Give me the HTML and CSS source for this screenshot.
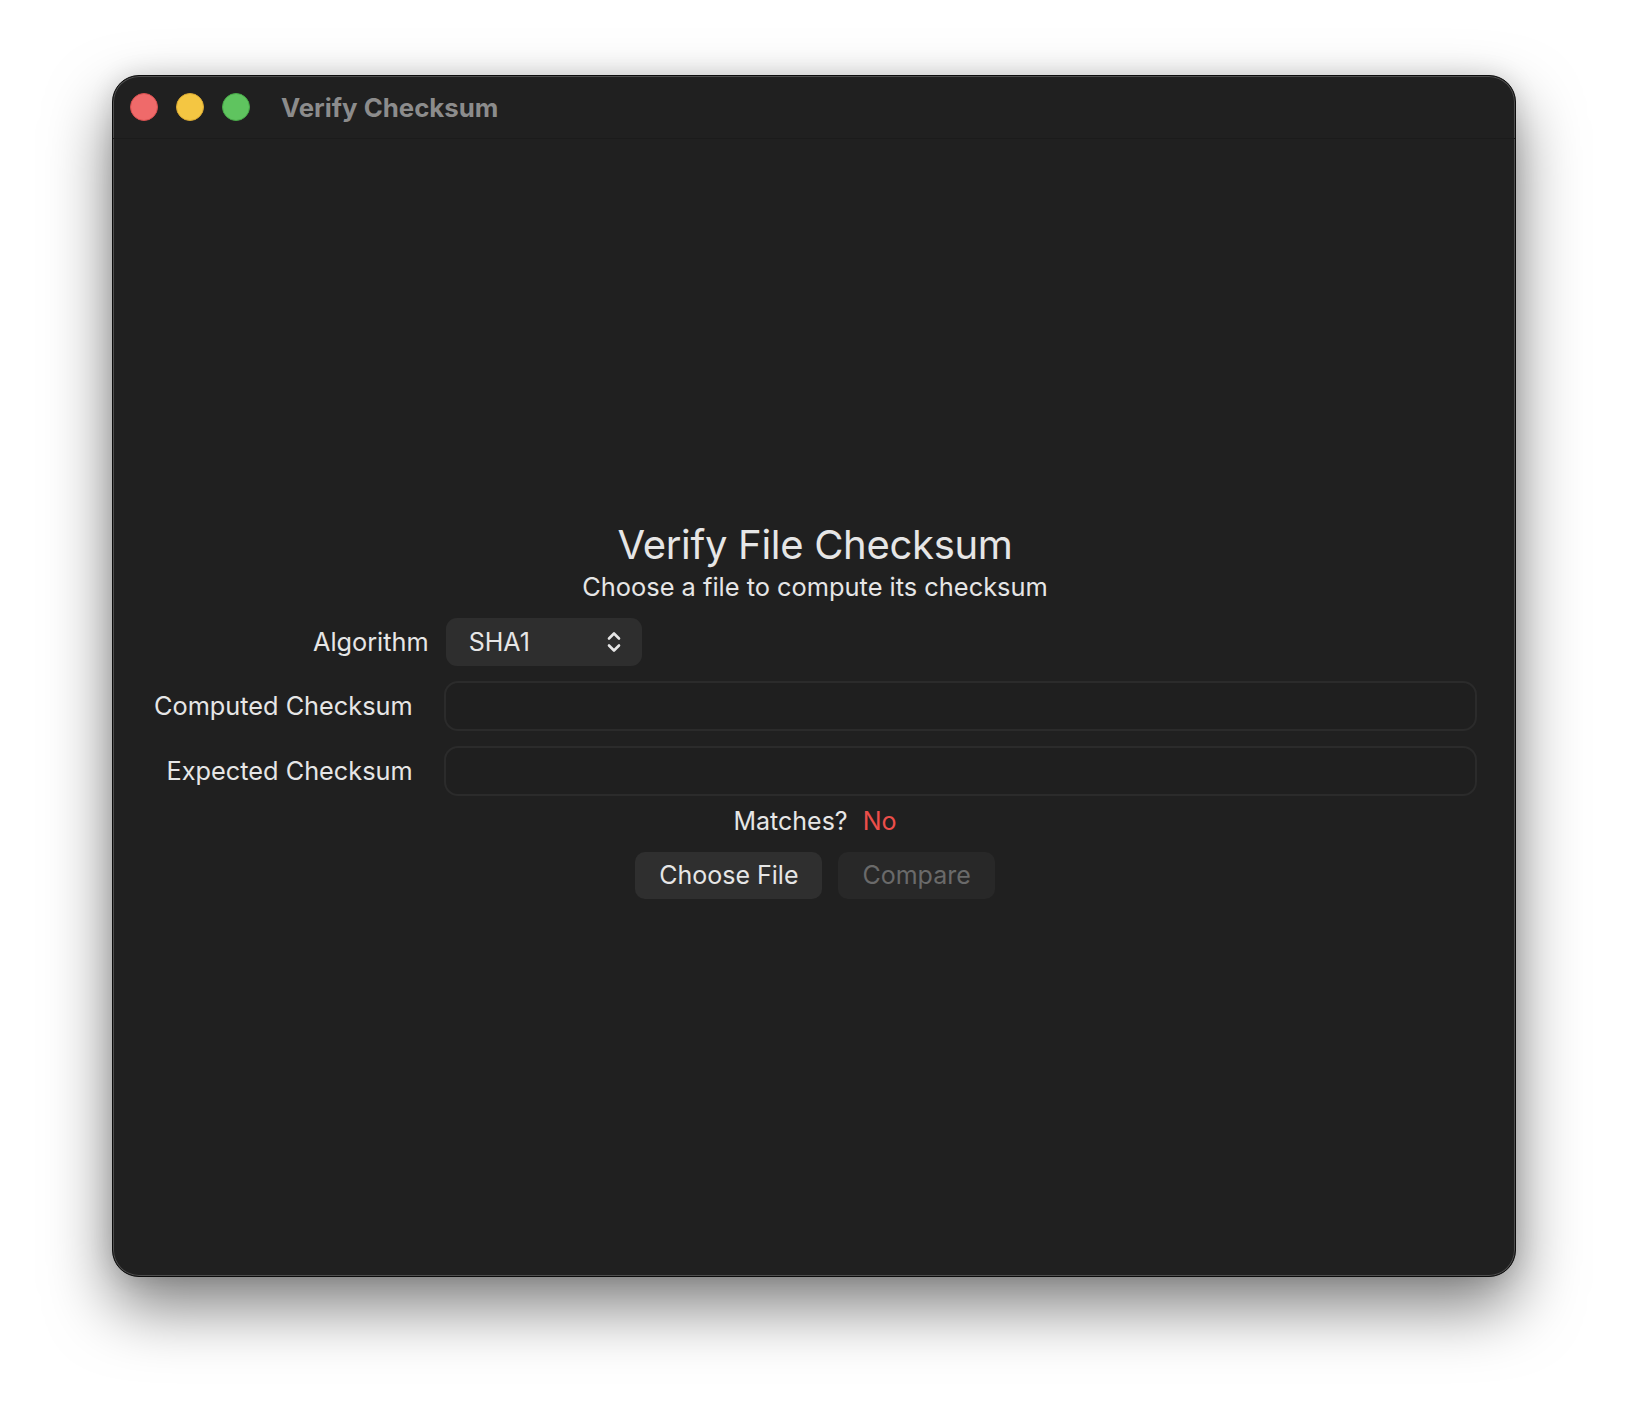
FILE: index.html
```html
<!DOCTYPE html>
<html lang="en">
<head>
    <meta charset="UTF-8">
    <meta name="viewport" content="width=device-width, initial-scale=1.0">
    <title>Verify Checksum</title>
    <link rel="stylesheet" href="styles.css">
</head>
<body>
    <div class="window">
        <header class="titlebar">
            <div class="lights">
                <span class="light light-close"></span>
                <span class="light light-min"></span>
                <span class="light light-zoom"></span>
            </div>
            <h2 class="title">Verify Checksum</h2>
        </header>

        <main class="content">
            <div class="form">
                <h1 class="heading">Verify File Checksum</h1>
                <p class="subtitle">Choose a file to compute its checksum</p>

                <div class="fields">
                    <label class="label label-picker">Algorithm</label>
                    <div>
                        <button class="popup">
                            <span>SHA1</span>
                            <svg class="chevrons" width="14" height="22" viewBox="0 0 14 22">
                                <path d="M2 7.5 L7 2.5 L12 7.5" />
                                <path d="M2 14.5 L7 19.5 L12 14.5" />
                            </svg>
                        </button>
                    </div>

                    <label class="label">Computed Checksum</label>
                    <input class="field" type="text" readonly>

                    <label class="label">Expected Checksum</label>
                    <input class="field" type="text">
                </div>

                <p class="matches">Matches? <span class="no">No</span></p>

                <div class="actions">
                    <button class="btn">Choose File</button>
                    <button class="btn" disabled>Compare</button>
                </div>
            </div>
        </main>
    </div>
</body>
</html>
```

FILE: styles.css
```css
* {
    margin: 0;
    padding: 0;
    box-sizing: border-box;
    font-family: Inter, "Noto Sans", sans-serif;
}

html {
    background-color: #fff;
}

body {
    min-height: 1426px;
    padding: 75px 0 0 112px;
}

.window {
    width: 1404px;
    height: 1202px;
    background-color: #202020;
    border: 1px solid #0c0c0c;
    border-radius: 27px;
    box-shadow: inset 0 0 0 1px #4e4e4e, 0 30px 64px rgba(0, 0, 0, 0.5), 0 0 24px rgba(0, 0, 0, 0.12);
    display: flex;
    flex-direction: column;
    overflow: hidden;
}

.titlebar {
    height: 63px;
    display: flex;
    align-items: center;
    padding-left: 17px;
    border-bottom: 1px solid #1b1b1b;
}

.lights {
    display: flex;
    gap: 18px;
}

.light {
    width: 28px;
    height: 28px;
    border-radius: 50%;
}

.light-close {
    background-color: #ef6a6a;
    border: 1px solid #d84f4f;
}

.light-min {
    background-color: #f4c642;
    border: 1px solid #d9a933;
}

.light-zoom {
    background-color: #5fc45f;
    border: 1px solid #48a848;
}

.title {
    margin-left: 31px;
    font-size: 25.8px;
    font-weight: 700;
    color: #8c8c8c;
    margin-top: 0;
}

.content {
    flex: 1;
    display: flex;
    align-items: center;
    padding: 0 38px 0 40px;
}

.form {
    width: 100%;
    display: flex;
    flex-direction: column;
    align-items: center;
}

.heading {
    font-size: 40px;
    font-weight: 400;
    color: #e6e6e6;
    line-height: 48px;
    letter-spacing: -0.3px;
    margin-top: 4px;
}

.subtitle {
    font-size: 25.4px;
    color: #e6e6e6;
    line-height: 30px;
    margin-top: 3px;
}

.fields {
    width: 100%;
    display: grid;
    grid-template-columns: auto 1fr;
    column-gap: 31px;
    row-gap: 15px;
    align-items: center;
    margin-top: 16px;
}

.label {
    font-size: 25.3px;
    color: #e6e6e6;
    text-align: right;
    padding-left: 1px;
}

.label-picker {
    margin-right: -16px;
}

.popup {
    display: flex;
    align-items: center;
    justify-content: space-between;
    width: 196px;
    height: 48px;
    margin-left: 2px;
    padding: 0 21px 0 23px;
    background-color: #2e2e2e;
    border: none;
    border-radius: 11px;
    color: #e6e6e6;
    font-size: 25px;
}

.chevrons {
    fill: none;
    stroke: #e6e6e6;
    stroke-width: 2.6;
    stroke-linecap: round;
    stroke-linejoin: round;
}

.field {
    height: 50px;
    width: 100%;
    background-color: #1f1f1f;
    border: 2px solid #2b2b2b;
    border-radius: 14px;
    color: #e6e6e6;
    font-size: 25px;
    padding: 0 14px;
    outline: none;
}

.matches {
    font-size: 25px;
    color: #e6e6e6;
    line-height: 30px;
    margin-top: 10px;
    word-spacing: 8px;
}

.no {
    color: #ec4e4a;
}

.actions {
    display: flex;
    gap: 16px;
    margin-top: 16px;
}

.btn {
    height: 47px;
    padding: 0 24px;
    background-color: #2f2f2f;
    border: none;
    border-radius: 10px;
    color: #e6e6e6;
    font-size: 25px;
}

.btn:disabled {
    background-color: #282828;
    color: #6a6a6a;
}
```
